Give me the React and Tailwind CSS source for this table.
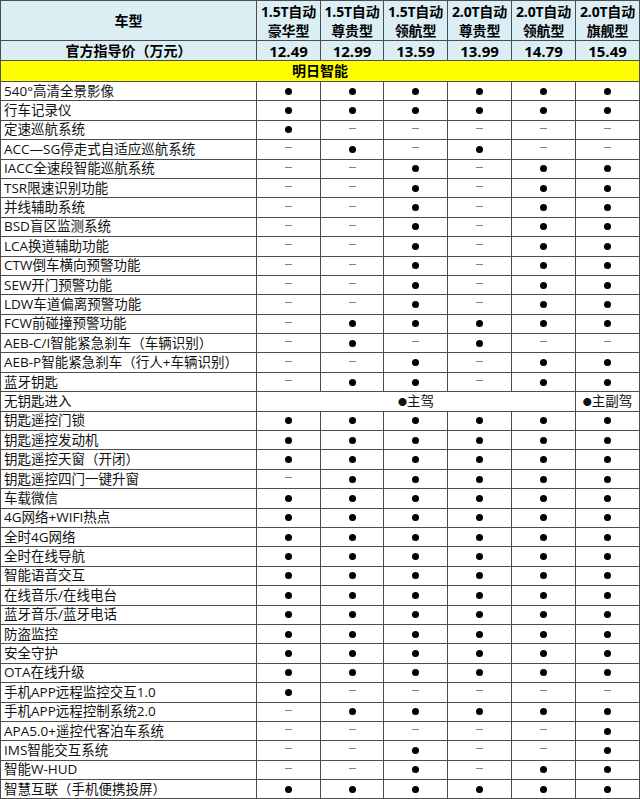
import React from "react";

const Y = 1;
const N = 0;

const models = [
  ["1.5T自动", "豪华型"],
  ["1.5T自动", "尊贵型"],
  ["1.5T自动", "领航型"],
  ["2.0T自动", "尊贵型"],
  ["2.0T自动", "领航型"],
  ["2.0T自动", "旗舰型"],
];

const prices = ["12.49", "12.99", "13.59", "13.99", "14.79", "15.49"];

const features = [
  ["540°高清全景影像", [Y, Y, Y, Y, Y, Y]],
  ["行车记录仪", [Y, Y, Y, Y, Y, Y]],
  ["定速巡航系统", [Y, N, N, N, N, N]],
  ["ACC—SG停走式自适应巡航系统", [N, Y, N, Y, N, N]],
  ["IACC全速段智能巡航系统", [N, N, Y, N, Y, Y]],
  ["TSR限速识别功能", [N, N, Y, N, Y, Y]],
  ["并线辅助系统", [N, N, Y, N, Y, Y]],
  ["BSD盲区监测系统", [N, N, Y, N, Y, Y]],
  ["LCA换道辅助功能", [N, N, Y, N, Y, Y]],
  ["CTW倒车横向预警功能", [N, N, Y, N, Y, Y]],
  ["SEW开门预警功能", [N, N, Y, N, Y, Y]],
  ["LDW车道偏离预警功能", [N, N, Y, N, Y, Y]],
  ["FCW前碰撞预警功能", [N, Y, Y, Y, Y, Y]],
  ["AEB-C/I智能紧急刹车（车辆识别）", [N, Y, N, Y, N, N]],
  ["AEB-P智能紧急刹车（行人+车辆识别）", [N, N, Y, N, Y, Y]],
  ["蓝牙钥匙", [N, Y, Y, N, Y, Y]],
  ["无钥匙进入", "keyless"],
  ["钥匙遥控门锁", [Y, Y, Y, Y, Y, Y]],
  ["钥匙遥控发动机", [Y, Y, Y, Y, Y, Y]],
  ["钥匙遥控天窗（开闭）", [Y, Y, Y, Y, Y, Y]],
  ["钥匙遥控四门一键升窗", [N, Y, Y, Y, Y, Y]],
  ["车载微信", [Y, Y, Y, Y, Y, Y]],
  ["4G网络+WIFI热点", [Y, Y, Y, Y, Y, Y]],
  ["全时4G网络", [Y, Y, Y, Y, Y, Y]],
  ["全时在线导航", [Y, Y, Y, Y, Y, Y]],
  ["智能语音交互", [Y, Y, Y, Y, Y, Y]],
  ["在线音乐/在线电台", [Y, Y, Y, Y, Y, Y]],
  ["蓝牙音乐/蓝牙电话", [Y, Y, Y, Y, Y, Y]],
  ["防盗监控", [Y, Y, Y, Y, Y, Y]],
  ["安全守护", [Y, Y, Y, Y, Y, Y]],
  ["OTA在线升级", [Y, Y, Y, Y, Y, Y]],
  ["手机APP远程监控交互1.0", [Y, N, N, N, N, N]],
  ["手机APP远程控制系统2.0", [N, Y, Y, Y, Y, Y]],
  ["APA5.0+遥控代客泊车系统", [N, N, N, N, N, Y]],
  ["IMS智能交互系统", [N, N, Y, N, N, Y]],
  ["智能W-HUD", [N, N, Y, N, Y, Y]],
  ["智慧互联（手机便携投屏）", [Y, Y, Y, Y, Y, Y]],
];

const cell = "border border-[#4d4d4d] p-0";

const Mark = ({ on }) =>
  on ? (
    <div className="mx-auto h-[7px] w-[7px] rounded-full bg-black" />
  ) : (
    <div className="mx-auto -mt-[2px] h-px w-[7px] bg-[#808080]" />
  );

export default function App() {
  return (
    <div
      className="h-[799px] w-[640px] overflow-hidden bg-white text-[#111]"
      style={{ fontFamily: '"Open Sans", "Noto Sans CJK SC", sans-serif' }}
    >
      <table className="w-[639px] table-fixed border-collapse">
        <colgroup>
          <col className="w-[256px]" />
          <col className="w-[64px]" />
          <col className="w-[63px]" />
          <col className="w-[64px]" />
          <col className="w-[64px]" />
          <col className="w-[64px]" />
          <col className="w-[64px]" />
        </colgroup>
        <tbody>
          <tr className="h-[40px] bg-[#daeef3] text-[14px] font-bold leading-[19px] text-black">
            <td className={`${cell} text-center`}>车型</td>
            {models.map((m, i) => (
              <td key={i} className={`${cell} whitespace-nowrap text-center tracking-[-0.2px]`}>
                {m[0]}
                <br />
                {m[1]}
              </td>
            ))}
          </tr>
          <tr className="h-[20px] bg-[#daeef3] text-[14px] font-bold leading-[18px] text-black">
            <td className={`${cell} text-center`}>官方指导价（万元）</td>
            {prices.map((p) => (
              <td key={p} className={`${cell} text-center text-[15px]`}>
                {p}
              </td>
            ))}
          </tr>
          <tr className="h-[21px] bg-[#ffff00] text-[14px] font-bold leading-[18px] text-black">
            <td colSpan={7} className={`${cell} text-center`}>
              明日智能
            </td>
          </tr>
          {features.map(([name, vals]) => (
            <tr key={name} className="h-[19.4px] text-[13.5px] leading-[17px]">
              <td className={`${cell} whitespace-nowrap pl-[3px]`}>{name}</td>
              {vals === "keyless" ? (
                <>
                  <td colSpan={5} className={`${cell} text-center`}>
                    <span className="align-[1px] text-[9px]">●</span>主驾
                  </td>
                  <td className={`${cell} text-center`}>
                    <span className="align-[1px] text-[9px]">●</span>主副驾
                  </td>
                </>
              ) : (
                vals.map((v, i) => (
                  <td key={i} className={cell}>
                    <Mark on={v} />
                  </td>
                ))
              )}
            </tr>
          ))}
        </tbody>
      </table>
    </div>
  );
}
